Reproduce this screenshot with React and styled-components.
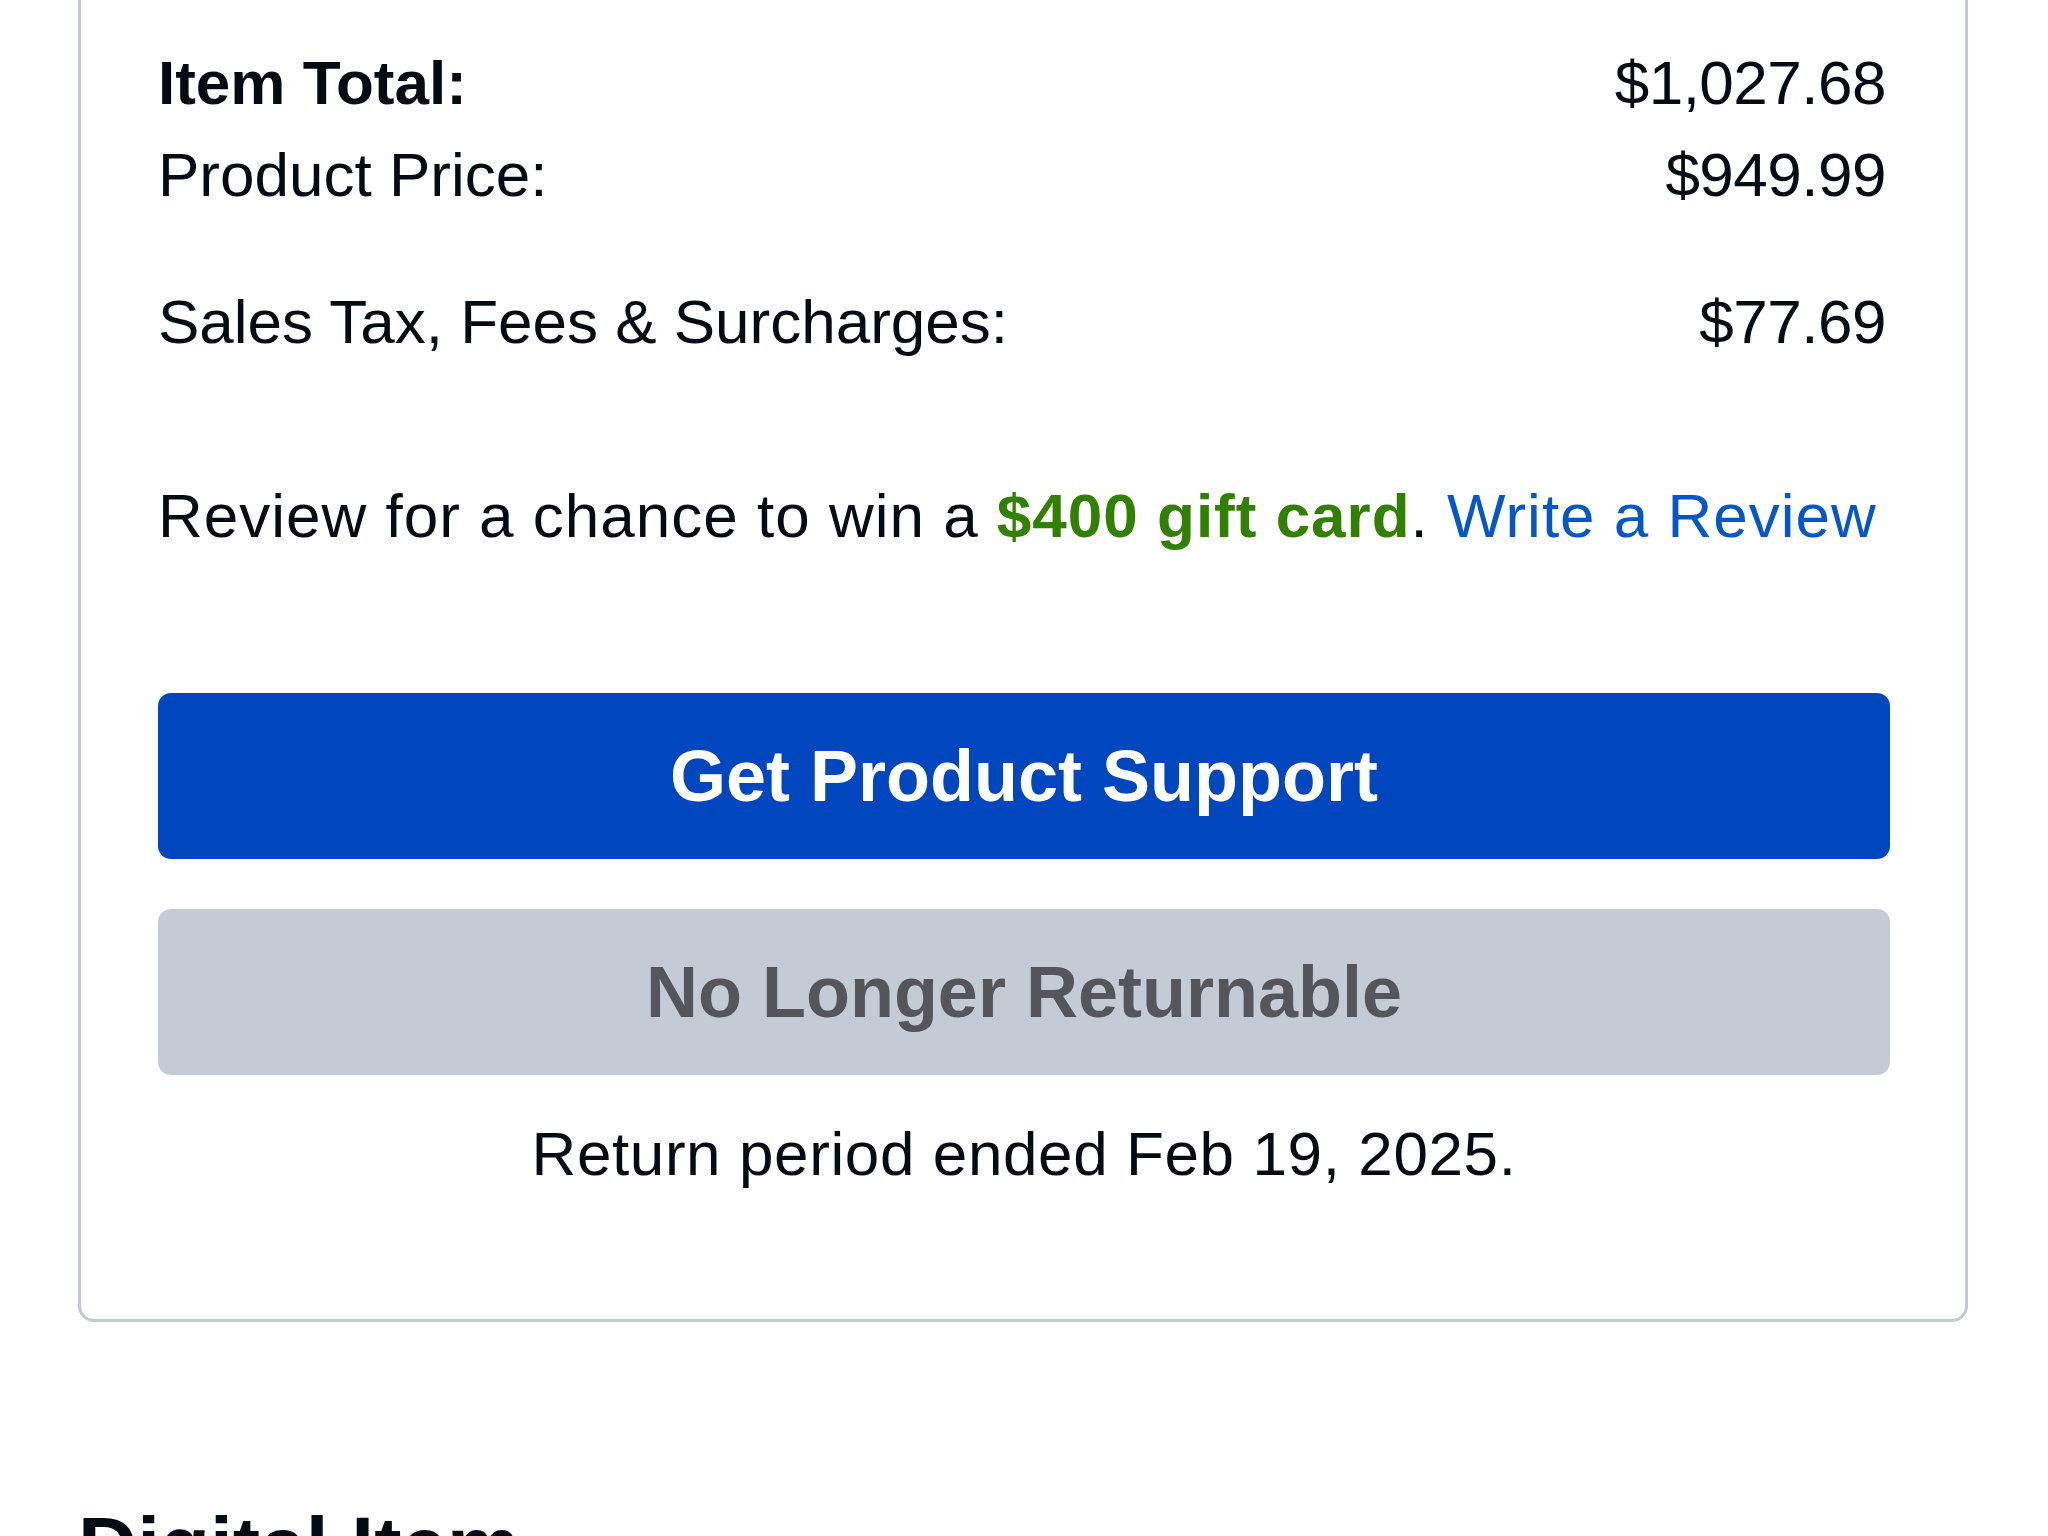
import React from 'react'
import styled, { createGlobalStyle } from 'styled-components'

const Colors = {
    text: '#040c13',
    border: '#c3c9d2',
    blue: '#0046be',
    link: '#0457c8',
    green: '#318000',
    grayButton: '#c5cbd5',
    grayText: '#55565b',
}

const GlobalStyle = createGlobalStyle`
    html, body {
        margin: 0;
        padding: 0;
        background: #ffffff;
    }
    body {
        font-family: "Liberation Sans", Arial, sans-serif;
        color: ${Colors.text};
        -webkit-font-smoothing: antialiased;
    }
`

const Page = styled.div`
    width: 2048px;
    height: 1536px;
    overflow: hidden;
    box-sizing: border-box;
    padding: 0 80px 0 78px;
`

const Card = styled.section`
    box-sizing: border-box;
    width: 1890px;
    border: 3px solid ${Colors.border};
    border-top: none;
    border-radius: 0 0 16px 16px;
    padding: 46px 75px 128px 77px;
    display: flex;
    flex-direction: column;
`

const Row = styled.div`
    display: flex;
    justify-content: space-between;
    align-items: baseline;
    font-size: 62px;
    line-height: 74px;
    font-weight: ${(p) => (p.$bold ? 700 : 400)};
    margin-top: ${(p) => p.$gap || 0}px;
    padding-right: 4px;
`

const Amount = styled.span`
    font-weight: 400;
    letter-spacing: -0.5px;
`

const Promo = styled.p`
    margin: 120px 0 0;
    font-size: 62px;
    line-height: 74px;
    letter-spacing: 1px;
    white-space: nowrap;
`

const Highlight = styled.strong`
    color: ${Colors.green};
    font-weight: 700;
`

const ReviewLink = styled.a`
    color: ${Colors.link};
    text-decoration: none;
`

const Actions = styled.div`
    display: flex;
    flex-direction: column;
    gap: 50px;
    margin-top: 140px;
`

const ActionButton = styled.button`
    height: 166px;
    width: 100%;
    border: none;
    border-radius: 13px;
    font-family: "Liberation Sans", Arial, sans-serif;
    font-size: 72px;
    font-weight: 700;
    background: ${(p) => (p.$disabled ? Colors.grayButton : Colors.blue)};
    color: ${(p) => (p.$disabled ? Colors.grayText : '#ffffff')};
    cursor: ${(p) => (p.$disabled ? 'default' : 'pointer')};
`

const Note = styled.p`
    margin: 42px 0 0;
    text-align: center;
    font-size: 62px;
    line-height: 74px;
    letter-spacing: 0.6px;
`

const SectionTitle = styled.h2`
    margin: 183px 0 0;
    font-size: 82px;
    line-height: 82px;
    font-weight: 700;
`

export default function App() {
    return (
        <>
            <GlobalStyle />
            <Page>
                <Card>
                    <Row $bold>
                        <span>Item Total:</span>
                        <Amount>$1,027.68</Amount>
                    </Row>
                    <Row $gap={18}>
                        <span>Product Price:</span>
                        <Amount>$949.99</Amount>
                    </Row>
                    <Row $gap={73}>
                        <span>Sales Tax, Fees &amp; Surcharges:</span>
                        <Amount>$77.69</Amount>
                    </Row>

                    <Promo>
                        Review for a chance to win a <Highlight>$400 gift card</Highlight>.{' '}
                        <ReviewLink href="#">Write a Review</ReviewLink>
                    </Promo>

                    <Actions>
                        <ActionButton>Get Product Support</ActionButton>
                        <ActionButton $disabled disabled>No Longer Returnable</ActionButton>
                    </Actions>

                    <Note>Return period ended Feb 19, 2025.</Note>
                </Card>

                <SectionTitle>Digital Item</SectionTitle>
            </Page>
        </>
    )
}
